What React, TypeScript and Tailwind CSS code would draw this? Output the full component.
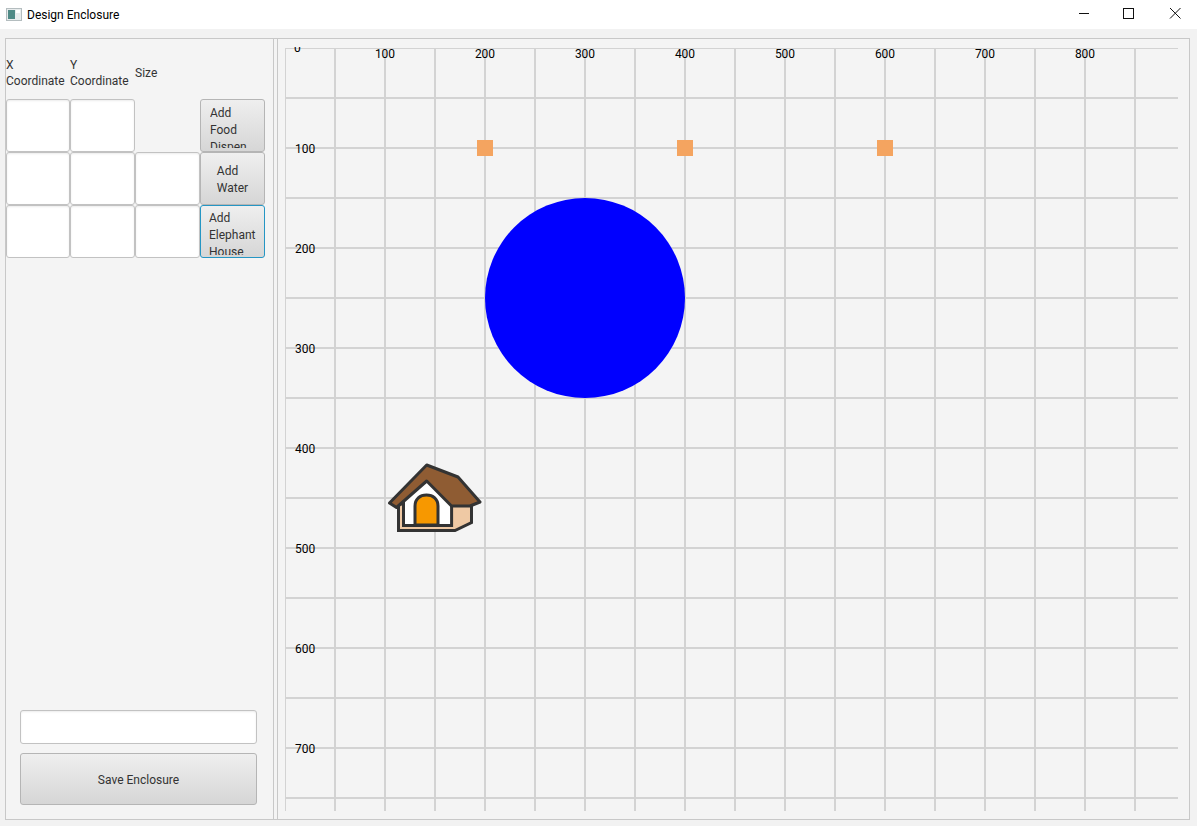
const font = "font-['Roboto','Open_Sans',sans-serif]";

const gridX = Array.from({ length: 17 }, (_, i) => 50 + i * 50);
const gridY = Array.from({ length: 15 }, (_, i) => 51 + i * 50);
const xLabels = [100, 200, 300, 400, 500, 600, 700, 800];
const yLabels = [100, 200, 300, 400, 500, 600, 700];
const feeders = [200, 400, 600];

function TitleBar() {
  return (
    <div className="flex h-[29px] items-center bg-white text-[12px] text-black">
      <svg width="16" height="14" viewBox="0 0 16 14" className="ml-[6px] mr-[5px]">
        <rect x="0.5" y="0.5" width="15" height="12" fill="#e8eced" stroke="#b4bdbf" />
        <rect x="2" y="2" width="7" height="9" fill="#4f8a86" />
        <rect x="10" y="2" width="4" height="3" fill="#ffffff" />
      </svg>
      <span>Design Enclosure</span>
      <div className="ml-auto flex items-center">
        <svg width="45" height="29" viewBox="0 0 45 29">
          <line x1="17" y1="13.5" x2="27" y2="13.5" stroke="#111" />
        </svg>
        <svg width="45" height="29" viewBox="0 0 45 29" className="mr-[1px]">
          <rect x="16.5" y="8.5" width="10" height="10" fill="none" stroke="#111" />
        </svg>
        <svg width="45" height="29" viewBox="0 0 45 29" className="mr-[-1px]">
          <path d="M17 8 L27.5 18.5 M27.5 8 L17 18.5" stroke="#111" fill="none" />
        </svg>
      </div>
    </div>
  );
}

function Field({ className = "" }: { className?: string }) {
  return (
    <div
      className={`rounded-[3px] border border-[#c2c2c2] bg-white shadow-[inset_0_1px_2px_rgba(0,0,0,0.08)] ${className}`}
    />
  );
}

const btn =
  "overflow-hidden rounded-[3px] border bg-gradient-to-b from-[#efefef] to-[#d6d6d6] text-[12px] leading-[17px] text-[#333333]";

function SidePanel() {
  return (
    <div className="flex w-[267px] shrink-0 flex-col pr-[7px] text-[12px] text-[#333333]">
      <div className="grid h-[60px] grid-cols-[64px_65px_65px_65px] items-end">
        <div className="mb-[10px] leading-[16px]">
          X<br />
          Coordinate
        </div>
        <div className="mb-[10px] leading-[16px]">
          Y<br />
          Coordinate
        </div>
        <div className="mb-[18px] leading-[16px]">Size</div>
      </div>
      <div className="grid grid-cols-[64px_65px_65px_65px] grid-rows-[53px_53px_53px]">
        <Field />
        <Field />
        <div />
        <div className={`${btn} border-[#b5b5b5] pl-[9px] pt-[5px]`}>
          <div className="h-[43px] overflow-hidden">
            Add
            <br />
            Food
            <br />
            Dispen
          </div>
        </div>
        <Field />
        <Field />
        <Field />
        <div className={`${btn} flex items-center justify-center border-[#b5b5b5] pt-[2px]`}>
          <div>
            Add
            <br />
            Water
          </div>
        </div>
        <Field />
        <Field />
        <Field />
        <div className={`${btn} border-[#2596c4] pl-[8px] pt-[4px]`}>
          <div className="h-[45px] overflow-hidden">
            Add
            <br />
            Elephant
            <br />
            House
          </div>
        </div>
      </div>
      <div className="mb-[14px] mt-auto flex flex-col gap-[9px] pl-[14px] pr-[9px]">
        <Field className="h-[34px]" />
        <div className={`${btn} flex h-[52px] items-center justify-center border-[#b5b5b5] pt-[2px]`}>
          Save Enclosure
        </div>
      </div>
    </div>
  );
}

function House() {
  return (
    <svg width="96" height="72" viewBox="0 0 96 72" className="absolute left-[103px] top-[415px]">
      <path d="M10.5 42 V68.5 H67 L83.5 60.5 V42 Z" fill="#efc9a4" stroke="#333333" strokeWidth="3" />
      <path d="M15.5 38 L38.7 17 L63.6 41 V63.5 H15.5 Z" fill="#ffffff" stroke="#333333" strokeWidth="3" />
      <path
        d="M27 63 V44 C27 37 32 33 38.5 33 C45 33 50 37 50 44 V63 Z"
        fill="#f79800"
        stroke="#333333"
        strokeWidth="3"
      />
      <path
        d="M1.5 41 L38.7 3 L70 15 L92 40 L82 44 L63.5 44 L38.7 19 L8.5 45.5 Z"
        fill="#8f5c33"
        stroke="#333333"
        strokeWidth="3"
        strokeLinejoin="round"
      />
    </svg>
  );
}

function Canvas() {
  return (
    <div className="relative h-[764px] w-[893px] overflow-hidden text-[12px] leading-[16px] text-black">
      <svg width="893" height="764" className="absolute inset-0">
        <line x1="0.5" y1="1" x2="0.5" y2="764" stroke="#d3d3d3" />
        <line x1="0" y1="1.5" x2="893" y2="1.5" stroke="#d3d3d3" />
        {gridX.map((x) => (
          <line key={x} x1={x} y1="1" x2={x} y2="764" stroke="#d3d3d3" strokeWidth="2" />
        ))}
        {gridY.map((y) => (
          <line key={y} x1="0" y1={y} x2="893" y2={y} stroke="#d3d3d3" strokeWidth="2" />
        ))}
      </svg>
      <span className="absolute left-[9px] top-[-7px]">0</span>
      {xLabels.map((v) => (
        <span key={v} className="absolute w-[40px] text-center" style={{ left: v - 20, top: -1 }}>
          {v}
        </span>
      ))}
      {yLabels.map((v) => (
        <span key={v} className="absolute left-[10px]" style={{ top: v - 6 }}>
          {v}
        </span>
      ))}
      {feeders.map((v) => (
        <div key={v} className="absolute h-[16px] w-[16px] bg-[#f4a460]" style={{ left: v - 8, top: 93 }} />
      ))}
      <div className="absolute left-[200px] top-[151px] h-[200px] w-[200px] rounded-full bg-[#0000ff]" />
      <House />
    </div>
  );
}

export default function App() {
  return (
    <div className={`flex h-[826px] w-[1197px] flex-col overflow-hidden bg-[#f2f2f2] ${font}`}>
      <TitleBar />
      <div className="mb-[6px] ml-[5px] mr-[7px] mt-[9px] flex min-h-0 flex-1 border border-[#c8c8c8] bg-[#f4f4f4]">
        <SidePanel />
        <div className="w-[5px] shrink-0 border-x border-[#c8c8c8] bg-[#f4f4f4]" />
        <div className="pl-[7px] pt-[8px]">
          <Canvas />
        </div>
      </div>
    </div>
  );
}
